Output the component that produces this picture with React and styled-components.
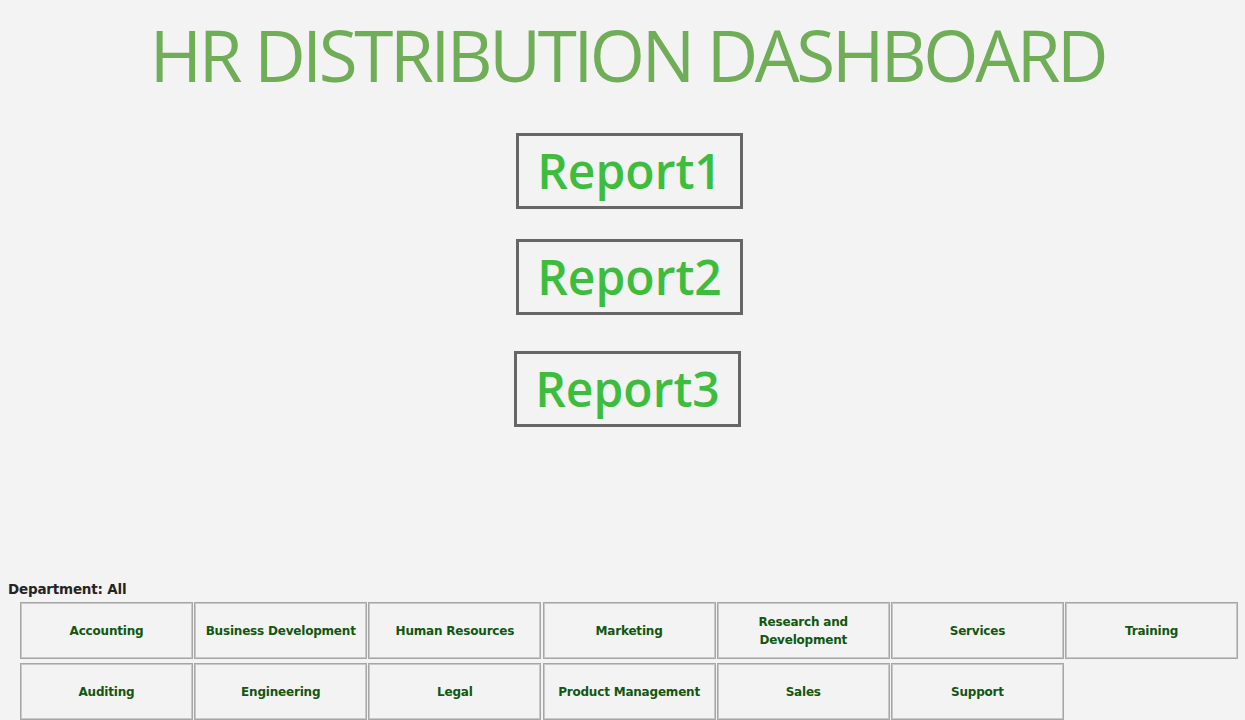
import styled, { createGlobalStyle } from "styled-components";

const GlobalStyle = createGlobalStyle`
  html, body {
    margin: 0;
    padding: 0;
    background: #f3f3f3;
  }
  body {
    font-family: "Open Sans", "Noto Sans", sans-serif;
  }
`;

const Page = styled.div`
  width: 1245px;
  height: 720px;
  overflow: hidden;
  display: flex;
  flex-direction: column;
  background: #f3f3f3;
`;

const Title = styled.h1`
  margin: 12px 0 0;
  text-align: center;
  font-family: "Open Sans", sans-serif;
  font-weight: 400;
  font-size: 71px;
  line-height: 86px;
  color: #70ad57;
  letter-spacing: -3.4px;
  padding-left: 10px;
`;

const Reports = styled.div`
  display: flex;
  flex-direction: column;
  align-items: center;
  margin-top: 35px;
`;

const ReportButton = styled.div`
  box-sizing: border-box;
  width: 227px;
  height: 76px;
  border: 3px solid #666666;
  display: flex;
  align-items: center;
  justify-content: center;
  margin-top: ${({ $gap }) => $gap}px;
  margin-left: ${({ $shift }) => $shift}px;
  font-family: "Open Sans", sans-serif;
  font-weight: 600;
  font-size: 48px;
  color: #3dbd3d;
  padding-bottom: 2px;
`;

const Slicer = styled.div`
  margin-top: auto;
  padding: 0 0 0 8px;
`;

const SlicerLabel = styled.div`
  font-family: "DejaVu Sans", sans-serif;
  font-weight: 700;
  font-size: 13.5px;
  line-height: 16px;
  color: #252423;
  margin-bottom: 5px;
  letter-spacing: -0.2px;
`;

const Grid = styled.div`
  display: grid;
  grid-template-columns: repeat(7, 173px);
  grid-auto-rows: 57px;
  column-gap: 1.2px;
  row-gap: 4px;
  margin-left: 12px;
`;

const Tile = styled.div`
  box-sizing: border-box;
  border: 1px solid #a6a6a6;
  box-shadow: inset 0 0 0 1px #c8c8c8;
  display: flex;
  align-items: center;
  justify-content: center;
  text-align: center;
  padding: 0 6px;
  font-family: "DejaVu Sans", sans-serif;
  font-weight: 700;
  font-size: 12px;
  line-height: 18px;
  letter-spacing: -0.2px;
  color: #10570f;
`;

const departments = [
  "Accounting",
  "Business Development",
  "Human Resources",
  "Marketing",
  "Research and Development",
  "Services",
  "Training",
  "Auditing",
  "Engineering",
  "Legal",
  "Product Management",
  "Sales",
  "Support",
];

export default function App() {
  return (
    <Page>
      <GlobalStyle />
      <Title>HR DISTRIBUTION DASHBOARD</Title>
      <Reports>
        <ReportButton $gap={0} $shift={14}>Report1</ReportButton>
        <ReportButton $gap={30} $shift={14}>Report2</ReportButton>
        <ReportButton $gap={36} $shift={10}>Report3</ReportButton>
      </Reports>
      <Slicer>
        <SlicerLabel>Department: All</SlicerLabel>
        <Grid>
          {departments.map((d) => (
            <Tile key={d}>{d === "Research and Development" ? (
              <span>Research and<br />Development</span>
            ) : d}</Tile>
          ))}
        </Grid>
      </Slicer>
    </Page>
  );
}
